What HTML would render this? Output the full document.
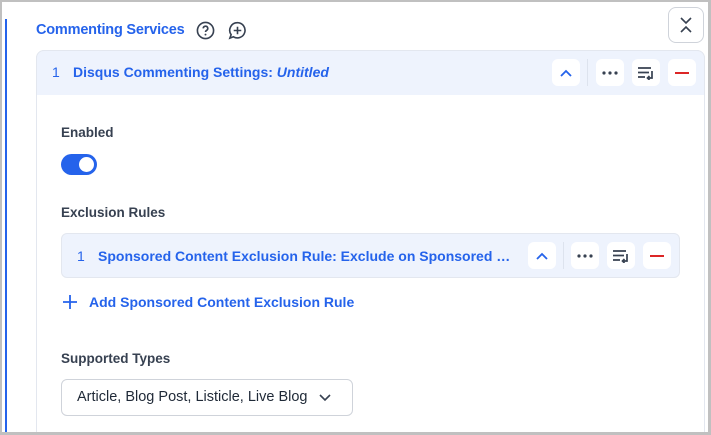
<!DOCTYPE html>
<html><head><style>
*{box-sizing:border-box;margin:0;padding:0}
html,body{width:711px;height:435px;overflow:hidden}
body{background:#fff;font-family:"Liberation Sans",sans-serif;position:relative}
.a{position:absolute}
.blue{color:#2563eb}
.btn{position:absolute;width:28px;height:27px;background:#fff;border-radius:6px;display:flex;align-items:center;justify-content:center}
.lbl{position:absolute;font-size:13.5px;font-weight:bold;color:#374151}
</style></head><body>
<div class="a" style="left:36px;top:50px;width:669px;height:385px;border:1px solid #e3e7ef;border-bottom:none;border-radius:8px 8px 0 0"></div>
<div class="a" style="left:0;top:0;width:711px;height:2px;background:#c0c0c0"></div>
<div class="a" style="left:0;top:0;width:2px;height:435px;background:#c0c0c0"></div>
<div class="a" style="right:0;top:0;width:3px;height:435px;background:#c0c0c0"></div>
<div class="a" style="left:0;top:432px;width:711px;height:3px;background:#c0c0c0"></div>
<div class="a" style="left:5px;top:19px;width:2px;height:413px;background:#2563eb"></div>

<div class="a blue" style="left:36px;top:22px;font-size:14.5px;font-weight:bold;letter-spacing:-0.2px">Commenting Services</div>
<svg class="a" style="left:196px;top:21px" width="19" height="19" viewBox="0 0 20 20"><circle cx="10" cy="10" r="8.5" fill="none" stroke="#374151" stroke-width="1.7"/><path d="M7.6 7.8a2.4 2.4 0 1 1 3.4 2.2c-.7.4-1 .8-1 1.6" fill="none" stroke="#374151" stroke-width="1.7"/><circle cx="10" cy="14.3" r="1" fill="#374151"/></svg>
<svg class="a" style="left:228px;top:21px" width="19" height="19" viewBox="0 0 20 20"><path d="M10 1.8a8 8 0 1 1-4.3 14.8L2 18l1.3-3.6A8 8 0 0 1 10 1.8z" fill="none" stroke="#374151" stroke-width="1.7"/><path d="M10 6v8M6 10h8" stroke="#374151" stroke-width="1.7"/></svg>

<div class="a" style="left:668px;top:7px;width:36px;height:36px;border:1px solid #cfd3da;border-radius:8px"></div>
<svg class="a" style="left:678px;top:16px" width="16" height="18" viewBox="0 0 16 18"><path d="M3 2l5 5 5-5M3 16l5-5 5 5" fill="none" stroke="#374151" stroke-width="1.6"/></svg>

<div class="a" style="left:36px;top:50px;width:669px;height:45px;background:#eef3fd;border-radius:8px 8px 0 0;border:1px solid #e3e7ef;border-bottom:none"></div>
<div class="a blue" style="left:52px;top:64px;font-size:14px">1</div>
<div class="a blue" style="left:73px;top:64px;font-size:14px;font-weight:bold">Disqus Commenting Settings: <i>Untitled</i></div>
<div class="btn" style="left:552px;top:59px"><svg width="14" height="10"><path d="M2 8l5-5 5 5" fill="none" stroke="#2563eb" stroke-width="1.8"/></svg></div>
<div class="a" style="left:587px;top:59px;width:1px;height:27px;background:#dde3ee"></div>
<div class="btn" style="left:596px;top:59px"><svg width="16" height="4"><circle cx="2" cy="2" r="1.6" fill="#374151"/><circle cx="8" cy="2" r="1.6" fill="#374151"/><circle cx="14" cy="2" r="1.6" fill="#374151"/></svg></div>
<div class="btn" style="left:632px;top:59px"><svg width="18" height="14"><path d="M1 2h13M1 6.5h11M1 11h7M15 5v7h-4M12.5 10l-2 2 2 2" fill="none" stroke="#374151" stroke-width="1.7"/></svg></div>
<div class="btn" style="left:668px;top:59px"><div style="width:14px;height:2px;background:#dc2626"></div></div>

<div class="lbl" style="left:61px;top:125px">Enabled</div>
<div class="a" style="left:61px;top:154px;width:36px;height:21px;border-radius:11px;background:#2563eb"></div>
<div class="a" style="left:79px;top:157px;width:15px;height:15px;border-radius:50%;background:#fff"></div>

<div class="lbl" style="left:61px;top:205px">Exclusion Rules</div>
<div class="a" style="left:61px;top:233px;width:619px;height:45px;background:#eef3fd;border:1px solid #e3e7ef;border-radius:6px"></div>
<div class="a blue" style="left:77px;top:248px;font-size:14px">1</div>
<div class="a blue" style="left:98px;top:248px;font-size:14px;font-weight:bold;width:416px;white-space:nowrap;overflow:hidden;text-overflow:ellipsis">Sponsored Content Exclusion Rule: Exclude on Sponsored Content</div>
<div class="btn" style="left:528px;top:242px"><svg width="14" height="10"><path d="M2 8l5-5 5 5" fill="none" stroke="#2563eb" stroke-width="1.8"/></svg></div>
<div class="a" style="left:563px;top:242px;width:1px;height:27px;background:#dde3ee"></div>
<div class="btn" style="left:571px;top:242px"><svg width="16" height="4"><circle cx="2" cy="2" r="1.6" fill="#374151"/><circle cx="8" cy="2" r="1.6" fill="#374151"/><circle cx="14" cy="2" r="1.6" fill="#374151"/></svg></div>
<div class="btn" style="left:607px;top:242px"><svg width="18" height="14"><path d="M1 2h13M1 6.5h11M1 11h7M15 5v7h-4M12.5 10l-2 2 2 2" fill="none" stroke="#374151" stroke-width="1.7"/></svg></div>
<div class="btn" style="left:643px;top:242px"><div style="width:14px;height:2px;background:#dc2626"></div></div>

<svg class="a" style="left:63px;top:295px" width="14" height="14"><path d="M7 0v14M0 7h14" stroke="#2563eb" stroke-width="1.8"/></svg>
<div class="a blue" style="left:89px;top:294px;font-size:14px;font-weight:bold">Add Sponsored Content Exclusion Rule</div>

<div class="lbl" style="left:61px;top:351px">Supported Types</div>
<div class="a" style="left:61px;top:379px;width:292px;height:37px;border:1px solid #cfd3da;border-radius:6px"></div>
<div class="a" style="left:77px;top:389px;font-size:14.5px;color:#1f2937">Article, Blog Post, Listicle, Live Blog</div>
<svg class="a" style="left:318px;top:393px" width="14" height="9"><path d="M2 2l5 5 5-5" fill="none" stroke="#374151" stroke-width="1.6"/></svg>
</body></html>
